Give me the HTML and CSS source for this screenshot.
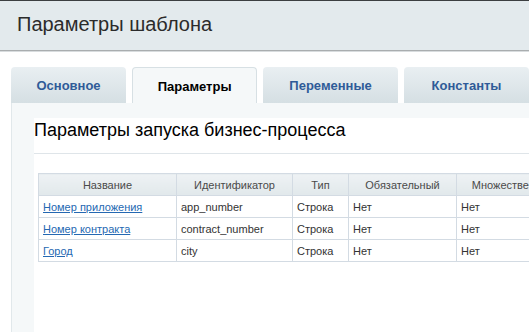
FILE: index.html
```html
<!DOCTYPE html>
<html lang="ru">
  <head>
    <meta charset="UTF-8" />
    <title>Параметры шаблона</title>
    <link rel="stylesheet" href="styles.css">
  </head>
  <body>
    <div class="page-header">
      <h1>Параметры шаблона</h1>
    </div>

    <div class="tabs">
      <div class="tab tab-1">Основное</div>
      <div class="tab tab-2 active">Параметры</div>
      <div class="tab tab-3">Переменные</div>
      <div class="tab tab-4">Константы</div>
    </div>

    <div class="tab-content">
      <div class="panel">
        <h2>Параметры запуска бизнес-процесса</h2>
        <table class="params">
          <colgroup>
            <col class="c-name" />
            <col class="c-id" />
            <col class="c-type" />
            <col class="c-req" />
            <col class="c-multi" />
          </colgroup>
          <thead>
            <tr>
              <th>Название</th>
              <th>Идентификатор</th>
              <th>Тип</th>
              <th>Обязательный</th>
              <th>Множественный</th>
            </tr>
          </thead>
          <tbody>
            <tr>
              <td><a href="#">Номер приложения</a></td>
              <td>app_number</td>
              <td>Строка</td>
              <td>Нет</td>
              <td>Нет</td>
            </tr>
            <tr>
              <td><a href="#">Номер контракта</a></td>
              <td>contract_number</td>
              <td>Строка</td>
              <td>Нет</td>
              <td>Нет</td>
            </tr>
            <tr>
              <td><a href="#">Город</a></td>
              <td>city</td>
              <td>Строка</td>
              <td>Нет</td>
              <td>Нет</td>
            </tr>
          </tbody>
        </table>
      </div>
    </div>
  </body>
</html>
```

FILE: styles.css
```css
html, body {
  margin: 0;
  padding: 0;
  height: 100%;
  overflow: hidden;
  background: #fff;
  font-family: 'Liberation Sans', Arial, sans-serif;
  color: #333;
}

body {
  display: flex;
  flex-direction: column;
}

.page-header {
  border-top: 1px solid #3c3f41;
  border-bottom: 1px solid #a9adaf;
  background: #e3eaed;
  height: 49px;
  display: flex;
  align-items: center;
  padding-left: 17px;
  box-shadow: 0 1px 0 #d8dcde;
}

.page-header h1 {
  margin: 0;
  font-size: 20px;
  font-weight: normal;
  color: #2b2b2b;
  padding-bottom: 2px;
}

.tabs {
  display: flex;
  gap: 6px;
  margin-top: 16px;
  padding-left: 11px;
}

.tab {
  height: 36px;
  box-sizing: border-box;
  display: flex;
  align-items: center;
  justify-content: center;
  font-size: 13px;
  font-weight: bold;
  color: #2f5b98;
  border-radius: 4px 4px 0 0;
  background: linear-gradient(to bottom, #e9eff2, #d5dfe3);
  padding-top: 1px;
}

.tab.active {
  background: #f5f8f9;
  border: 1px solid #d7e0e4;
  border-bottom: none;
  color: #000;
}

.tab-1 { width: 116px; }
.tab-2 { width: 126px; }
.tab-3 { width: 136px; }
.tab-4 { width: 125px; flex-shrink: 0; }

.tab-content {
  flex: 1;
  margin-left: 11px;
  background: #f5f8f9;
  border-left: 1px solid #e1e8eb;
  padding-top: 15px;
  padding-left: 22px;
  display: flex;
}

.panel {
  flex: 1;
  background: #fff;
  overflow: hidden;
}

.panel h2 {
  margin: 0;
  height: 36px;
  padding-top: 2px;
  box-sizing: border-box;
  font-size: 18px;
  font-weight: normal;
  color: #000;
  border-bottom: 1px solid #dfe5e9;
}

.params {
  margin: 19px 0 0 4px;
  border-collapse: collapse;
  table-layout: fixed;
  width: 532px;
  font-size: 11px;
}

.c-name { width: 138px; }
.c-id { width: 116px; }
.c-type { width: 56px; }
.c-req { width: 108px; }
.c-multi { width: 114px; }

.params th,
.params td {
  border: 1px solid #d3dbe3;
  height: 21px;
  padding: 0 4px;
  white-space: nowrap;
  overflow: hidden;
}

.params th {
  background: linear-gradient(to bottom, #eef2f4, #e1e8eb);
  font-weight: normal;
  color: #4a4a4a;
  text-align: center;
}

.params td {
  text-align: left;
  color: #333;
}

.params a {
  color: #2468b2;
}
```
